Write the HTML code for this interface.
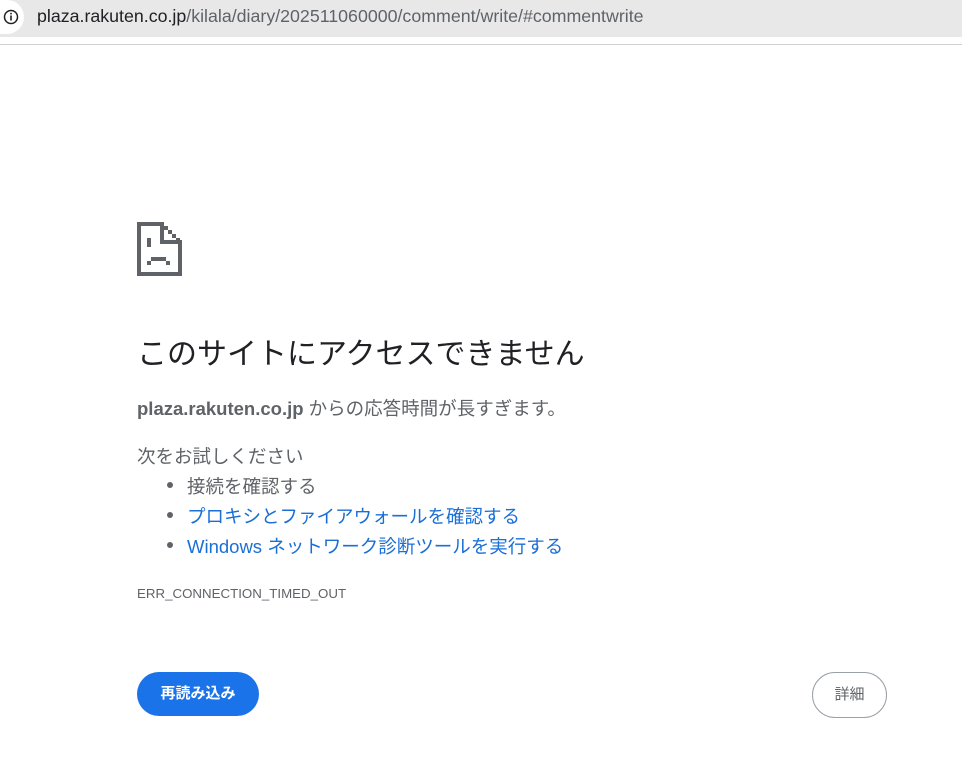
<!DOCTYPE html>
<html><head><meta charset="utf-8"><style>
body{margin:0;width:962px;height:766px;background:#fff;position:relative;overflow:hidden;font-family:"Liberation Sans","Noto Sans CJK JP",sans-serif;color:#202124}
.bar{position:absolute;left:0;top:0;width:962px;height:37px;background:#e8e8e8}
.line{position:absolute;left:0;top:44px;width:962px;height:1px;background:#d0d0d0}
.ic{position:absolute;left:0;top:0;width:24px;height:34px;background:#fff;border-radius:0 17px 17px 0}
.url{position:absolute;left:37px;top:6px;font-size:17.8px;color:#5f6368;white-space:nowrap}
.url b{font-weight:normal;color:#202124}
.a{position:absolute;white-space:nowrap}
h1{position:absolute;left:137px;top:329px;margin:0;font-weight:normal;font-size:30px;color:#202124;white-space:nowrap}
.t{font-size:18.5px;color:#5f6368}
.lnk{color:#1a6fd6}
.dot{position:absolute;width:6px;height:6px;border-radius:3px;background:#5f6368}
.btn{position:absolute;left:137px;top:672px;width:122px;height:44px;border-radius:22px;background:#1a73e8;color:#fff;font-size:15px;font-weight:bold;text-align:center;line-height:44px}
.btn2{position:absolute;left:812px;top:672px;width:73px;height:44px;border-radius:23px;border:1px solid #9aa0a6;color:#5f6368;font-size:15px;text-align:center;line-height:44px}
</style></head><body>
<div class="bar"></div><div class="line"></div>
<div class="ic"><svg width="24" height="34"><circle cx="11" cy="17" r="6.5" fill="none" stroke="#202124" stroke-width="1.5"/><rect x="10.2" y="15.5" width="1.6" height="5" fill="#202124"/><rect x="10.2" y="12.8" width="1.6" height="1.6" fill="#202124"/></svg></div>
<div class="url"><b>plaza.rakuten.co.jp</b>/kilala/diary/202511060000/comment/write/#commentwrite</div>
<svg style="position:absolute;left:137px;top:222px" width="46" height="54" viewBox="0 0 46 54" fill="#5f6368">
<rect x="0" y="0" width="4" height="54"/><rect x="0" y="50" width="45" height="4"/><rect x="41" y="20" width="4" height="34"/>
<rect x="0" y="0" width="27" height="4"/><rect x="23" y="0" width="4" height="22"/><rect x="23" y="18" width="22" height="4"/>
<rect x="27" y="4" width="4" height="4"/><rect x="31" y="8" width="4" height="4"/><rect x="35" y="12" width="4" height="4"/><rect x="39" y="16" width="4" height="4"/>
<rect x="10" y="16" width="4" height="9"/><rect x="14" y="35" width="15" height="4"/><rect x="10" y="39" width="4" height="4"/><rect x="29" y="39" width="4" height="4"/>
</svg>
<h1>このサイトにアクセスできません</h1>
<div class="a t" style="left:137px;top:395px"><b style="color:#5f6368">plaza.rakuten.co.jp</b> からの応答時間が長すぎます。</div>
<div class="a t" style="left:137px;top:443px">次をお試しください</div>
<div class="dot" style="left:167px;top:482px"></div>
<div class="dot" style="left:167px;top:512px"></div>
<div class="dot" style="left:167px;top:542px"></div>
<div class="a t" style="left:187px;top:473px">接続を確認する</div>
<div class="a t lnk" style="left:187px;top:503px">プロキシとファイアウォールを確認する</div>
<div class="a t lnk" style="left:187px;top:533px">Windows ネットワーク診断ツールを実行する</div>
<div class="a" style="left:137px;top:586px;font-size:13.3px;color:#5f6368">ERR_CONNECTION_TIMED_OUT</div>
<div class="btn">再読み込み</div>
<div class="btn2">詳細</div>
</body></html>
